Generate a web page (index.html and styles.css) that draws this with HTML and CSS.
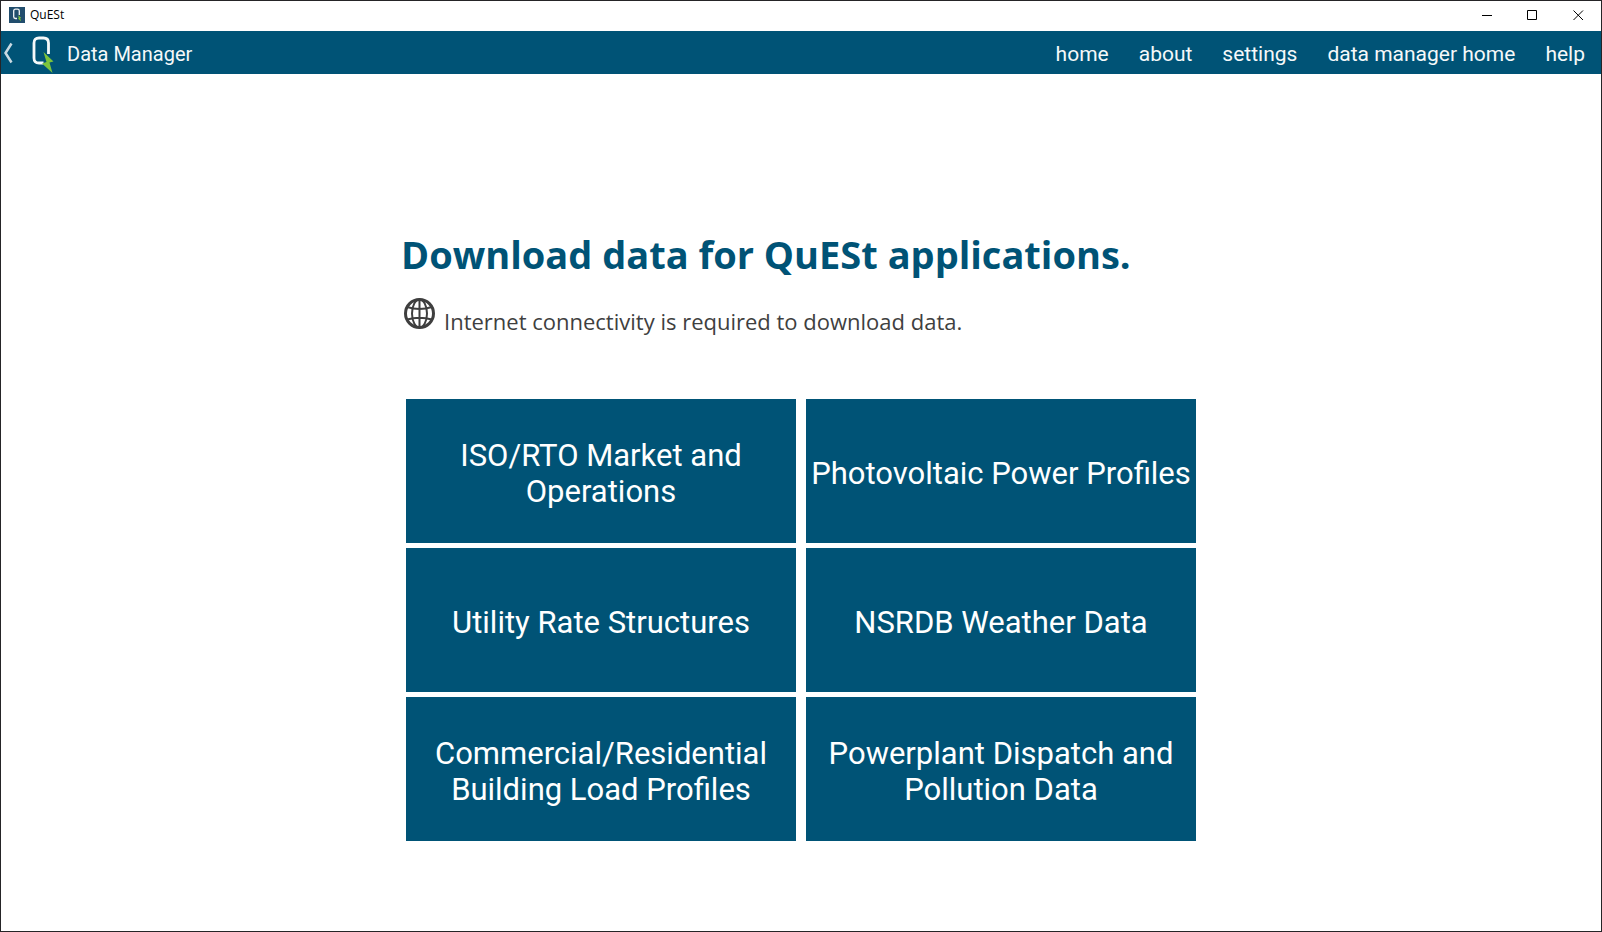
FILE: index.html
```html
<!DOCTYPE html>
<html lang="en">
<head>
<meta charset="utf-8">
<title>QuESt</title>
<link rel="stylesheet" href="styles.css">
</head>
<body>
<div class="window">
  <header class="titlebar">
    <svg class="app-icon" viewBox="0 0 16 16" aria-hidden="true">
      <rect width="16" height="16" fill="#214d6d"/>
      <path d="M8 11.500H6.500Q4.700 11.500 4.700 9.700V4Q4.700 2.200 6.500 2.200H8.500Q10.300 2.200 10.300 4V8" fill="none" stroke="#f2f5f7" stroke-width="1.300"/>
      <path d="M9 8.200L12.200 10.800L11.200 11.200L12 14.200L8.800 11.600L9.900 11.200Z" fill="#7cc33c"/>
    </svg>
    <span class="window-title">QuESt</span>
    <div class="window-controls">
      <button class="control" type="button" aria-label="Minimize"><svg viewBox="0 0 11 11"><path d="M1 5.500H11"/></svg></button>
      <button class="control" type="button" aria-label="Maximize"><svg viewBox="0 0 11 11"><path d="M.5 .5H9.500V9.500H.5Z"/></svg></button>
      <button class="control" type="button" aria-label="Close"><svg viewBox="0 0 11 11"><path d="M.5 .5L10 10M10 .5L.5 10"/></svg></button>
    </div>
  </header>

  <nav class="navbar">
    <button class="back" type="button" aria-label="Back"><svg viewBox="0 0 10 22"><path d="M8.500 1.500L2.500 11L8.500 20.500"/></svg></button>
    <svg class="logo" viewBox="0 0 22 38" aria-hidden="true">
      <path d="M11.500 27H7Q2 27 2 22V7Q2 2 7 2H11.500Q16.500 2 16.500 7V18" fill="none" stroke="#f5f9fa" stroke-width="2.800"/>
      <path d="M11.500 16L21.500 25.500L17.500 26.500L20.500 37L10 27.500L14.500 26Z" fill="#7cc33c"/>
    </svg>
    <span class="screen-name">Data Manager</span>
    <div class="links">
      <a href="#home">home</a>
      <a href="#about">about</a>
      <a href="#settings">settings</a>
      <a href="#data-manager">data manager home</a>
      <a href="#help">help</a>
    </div>
  </nav>

  <main class="content">
    <h1 class="heading">Download data for QuESt applications.</h1>
    <p class="notice">
      <svg class="globe" viewBox="0 0 32 32" aria-hidden="true">
        <circle cx="16.500" cy="16.500" r="14" stroke-width="3"/>
        <ellipse cx="16.500" cy="16.500" rx="7.500" ry="14"/>
        <path d="M16.500 2.500V30.500M4 10Q16.500 14 29 10M4 22.500Q16.500 19 29 22.500"/>
      </svg>
      <span>Internet connectivity is required to download data.</span>
    </p>
    <div class="tiles">
      <button class="tile" type="button">ISO/RTO Market and Operations</button>
      <button class="tile" type="button">Photovoltaic Power Profiles</button>
      <button class="tile" type="button">Utility Rate Structures</button>
      <button class="tile" type="button">NSRDB Weather Data</button>
      <button class="tile" type="button">Commercial/Residential Building Load Profiles</button>
      <button class="tile" type="button">Powerplant Dispatch and Pollution Data</button>
    </div>
  </main>
</div>
</body>
</html>
```

FILE: styles.css
```css
* { box-sizing: border-box; }

body {
  margin: 0;
  font-family: Roboto, "Open Sans", sans-serif;
  background: #fff;
}

button {
  margin: 0;
  padding: 0;
  border: 0;
  background: none;
  font: inherit;
  color: inherit;
}

.window {
  display: flex;
  flex-direction: column;
  min-height: 100vh;
  border: 1px solid #252427;
}

.titlebar {
  display: flex;
  align-items: center;
  height: 30px;
  padding: 0 0 2px 8px;
}

.app-icon {
  width: 16px;
  height: 16px;
}

.window-title {
  margin-left: 5px;
  font: 12px/16px "Open Sans", sans-serif;
  color: #000;
}

.window-controls {
  display: flex;
  height: 100%;
  margin-left: auto;
}

.control {
  display: flex;
  align-items: center;
  justify-content: center;
  width: 46px;
}

.control svg {
  width: 11px;
  height: 11px;
  fill: none;
  stroke: #000;
  stroke-width: 1;
}

.navbar {
  display: flex;
  align-items: center;
  height: 43px;
  padding: 0 16px 0 2px;
  background: #005376;
  color: #f5f9fa;
  font-size: 21px;
  line-height: 24px;
}

.back svg {
  display: block;
  width: 10px;
  height: 22px;
  fill: none;
  stroke: #c9dae2;
  stroke-width: 2.5;
}

.logo {
  width: 22px;
  height: 38px;
  margin: 5px 0 0 19px;
}

.screen-name {
  margin-left: 13px;
  padding-top: 2px;
  font-size: 20px;
}

.links {
  display: flex;
  gap: 30px;
  margin-left: auto;
  padding-top: 2px;
}

.links a {
  color: inherit;
  text-decoration: none;
}

.content {
  display: flex;
  flex: 1;
  flex-direction: column;
  justify-content: center;
  width: 50%;
  margin: 0 auto;
  padding-top: 67px;
}

.heading {
  margin: 0;
  padding-bottom: 4px;
  font: 700 38px/44px "Open Sans", sans-serif;
  color: #005376;
}

.notice {
  display: flex;
  gap: 9px;
  margin: 17px 0 62px;
  padding-left: 2px;
  font: 22px/32px "Open Sans", sans-serif;
  color: #3f3f3f;
}

.notice span { padding-top: 8px; }

.globe {
  width: 32px;
  height: 32px;
  fill: none;
  stroke: #3f3f3f;
  stroke-width: 2;
}

.tiles {
  display: grid;
  grid-template-columns: 1fr 1fr;
  grid-auto-rows: 144px;
  gap: 5px 10px;
  padding: 0 5px;
}

.tile {
  padding-top: 7px;
  background: #005376;
  color: #fff;
  font-size: 31px;
  line-height: 36px;
}
```
